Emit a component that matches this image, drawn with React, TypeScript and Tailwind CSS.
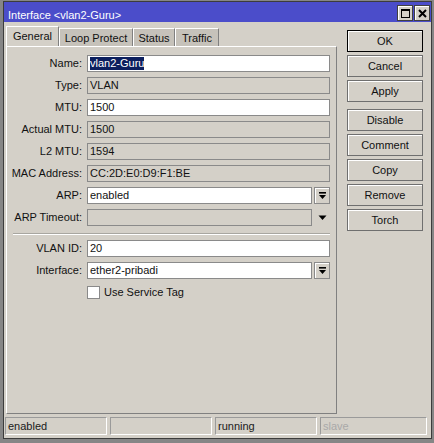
import React from 'react';

const font = "font-['Liberation_Sans',Arial,sans-serif]";

const DropIcon: React.FC = () => (
    <svg width="9" height="8" viewBox="0 0 9 8">
        <rect x="1" y="0" width="7" height="1.6" fill="#000" />
        <path d="M1 3 L8 3 L4.5 7 Z" fill="#000" />
    </svg>
);

const Field: React.FC<{ label: string; value?: string; editable?: boolean; selected?: boolean; drop?: 'button' | 'arrow' }> = ({ label, value = '', editable, selected, drop }) => (
    <div className="flex items-center h-[17px]">
        <div className="w-[76px] text-right pr-[1px] text-[11px] text-[#111] leading-none">{label}</div>
        <div className="ml-[4px] w-[243px] flex items-center gap-[2px] h-full">
            <div className={`flex-1 h-full border border-[#8a8a8a] flex items-center pl-[2px] text-[11px] leading-none text-[#111] ${editable ? 'bg-white' : 'bg-[#d4d0c8]'}`}>
                {selected ? <span className="bg-[#0c1f5e] text-white py-[1px]">{value}</span> : value}
            </div>
            {drop === 'button' && (
                <div className="w-[16px] h-full border border-[#8a8a8a] bg-[#d4d0c8] shadow-[inset_1px_1px_0_#fff] flex items-center justify-center">
                    <DropIcon />
                </div>
            )}
            {drop === 'arrow' && (
                <div className="w-[16px] h-full flex items-center justify-center">
                    <svg width="9" height="6" viewBox="0 0 9 6"><path d="M0.5 0.5 L8.5 0.5 L4.5 5 Z" fill="#000" /></svg>
                </div>
            )}
        </div>
    </div>
);

const Btn: React.FC<{ label: string; def?: boolean }> = ({ label, def }) => (
    <div className={`h-[22px] w-[76px] flex items-center justify-center text-[11px] text-[#111] bg-[#d4d0c8] border shadow-[inset_1px_1px_0_#fff] ${def ? 'border-black' : 'border-[#6f6f6f]'}`}>
        {label}
    </div>
);

const tabs = [
    { label: 'Loop Protect', w: 'w-[74px]' },
    { label: 'Status', w: 'w-[42px]' },
    { label: 'Traffic', w: 'w-[44px]' },
];

const App: React.FC = () => {
    return (
        <div className={`w-[434px] h-[443px] bg-[#868686] pt-[1px] pl-[3px] ${font}`}>
            <div className="w-[429px] h-[438px] border border-[#3c3c3c] bg-[#d4d0c8] flex flex-col">
                {/* Title bar */}
                <div className="h-[20px] bg-[#4b4dca] flex items-start justify-between">
                    <div className="pl-[4px] pt-[7px] text-[11px] leading-[13px] text-white">Interface &lt;vlan2-Guru&gt;</div>
                    <div className="flex gap-[1px] pt-[3px] pr-[1px]">
                        <div className="w-[16px] h-[16px] border border-[#404040] bg-[#d4d0c8] shadow-[inset_1px_1px_0_#fff] flex items-center justify-center">
                            <div className="w-[9px] h-[9px] border border-black border-t-2" />
                        </div>
                        <div className="w-[16px] h-[16px] border border-[#404040] bg-[#d4d0c8] shadow-[inset_1px_1px_0_#fff] flex items-center justify-center">
                            <svg width="9" height="9" viewBox="0 0 9 9"><path d="M1 1 L8 8 M8 1 L1 8" stroke="#000" strokeWidth="2" /></svg>
                        </div>
                    </div>
                </div>

                {/* Body */}
                <div className="flex pl-[2px] pt-[4px]">
                    <div className="w-[331px] flex flex-col">
                        {/* Tabs */}
                        <div className="h-[20px] flex items-end">
                            <div className="w-[53px] h-[20px] border-l border-t border-white border-r border-r-[#808080] bg-[#d4d0c8] flex items-center justify-center text-[11px] text-[#111]">General</div>
                            {tabs.map(t => (
                                <div key={t.label} className={`${t.w} h-[18px] border-l border-t border-white border-r border-r-[#808080] bg-[#c6c2ba] flex items-center justify-center pt-[1px] text-[11px] text-[#111]`}>
                                    {t.label}
                                </div>
                            ))}
                        </div>
                        {/* Panel */}
                        <div className="h-[368px] border-l border-t border-white border-r border-b border-r-[#808080] border-b-[#808080] pt-[8px] flex flex-col">
                            <div className="flex flex-col gap-[5px]">
                                <Field label="Name:" value="vlan2-Guru" editable selected />
                                <Field label="Type:" value="VLAN" />
                                <Field label="MTU:" value="1500" editable />
                                <Field label="Actual MTU:" value="1500" />
                                <Field label="L2 MTU:" value="1594" />
                                <Field label="MAC Address:" value="CC:2D:E0:D9:F1:BE" />
                                <Field label="ARP:" value="enabled" editable drop="button" />
                                <Field label="ARP Timeout:" drop="arrow" />
                            </div>
                            <div className="ml-[6px] w-[317px] mt-[7px] border-t border-[#a8a6a0] border-b border-b-white" />
                            <div className="flex flex-col gap-[5px] mt-[5px]">
                                <Field label="VLAN ID:" value="20" editable />
                                <Field label="Interface:" value="ether2-pribadi" editable drop="button" />
                            </div>
                            <div className="flex items-center mt-[7px] ml-[80px] h-[13px]">
                                <div className="w-[13px] h-[13px] bg-white border border-[#8a8a8a]" />
                                <span className="ml-[4px] text-[11px] text-[#111]">Use Service Tag</span>
                            </div>
                        </div>
                    </div>

                    {/* Buttons */}
                    <div className="ml-[10px] pt-[4px] flex flex-col gap-[3px]">
                        <Btn label="OK" def />
                        <Btn label="Cancel" />
                        <Btn label="Apply" />
                        <div className="mt-[4px] flex flex-col gap-[3px]">
                            <Btn label="Disable" />
                            <Btn label="Comment" />
                            <Btn label="Copy" />
                            <Btn label="Remove" />
                            <Btn label="Torch" />
                        </div>
                    </div>
                </div>

                {/* Status bar */}
                <div className="mt-[3px] pl-[1px] flex gap-[3px] h-[18px]">
                    {[
                        { t: 'enabled', w: 'w-[102px]', c: 'text-[#1a1a1a]' },
                        { t: '', w: 'w-[102px]', c: '' },
                        { t: 'running', w: 'w-[102px]', c: 'text-[#1a1a1a]' },
                        { t: 'slave', w: 'w-[107px]', c: 'text-[#a9a9a9]' },
                    ].map((s, i) => (
                        <div key={i} className={`${s.w} h-full border-l border-t border-[#9a9a9a] border-r border-b border-r-white border-b-white flex items-center pl-[2px] text-[11px] ${s.c}`}>
                            {s.t}
                        </div>
                    ))}
                </div>
            </div>
        </div>
    );
};

export default App;
